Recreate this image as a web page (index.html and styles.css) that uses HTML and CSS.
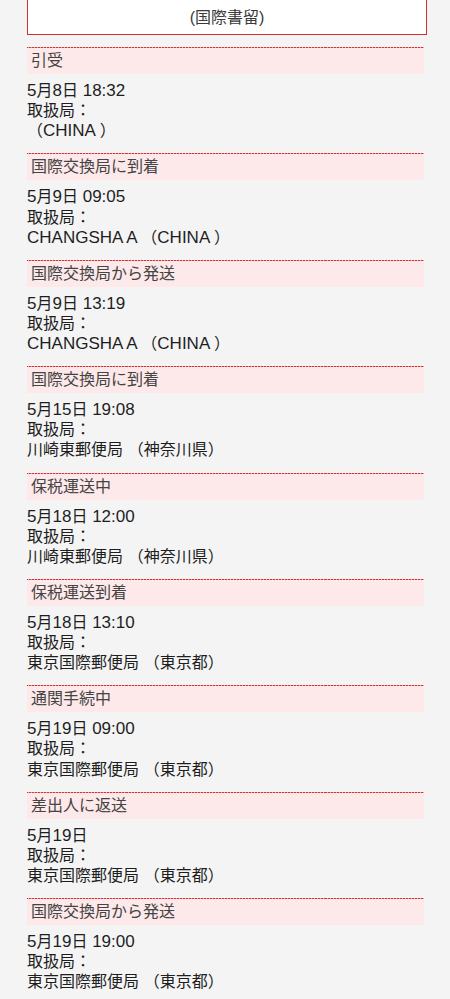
FILE: index.html
```html
<!DOCTYPE html>
<html lang="ja">
<head>
<meta charset="utf-8">
<link rel="stylesheet" href="styles.css">
</head>
<body>
<main class="page">
  <div class="title-box">(国際書留)</div>
  <ul class="events">
    <li class="event">
      <div class="event-head">引受</div>
      <div class="event-body"><span class="lt">5</span>月<span class="lt">8</span>日<span class="lt"> 18:32</span><br>取扱局：<br>（<span class="lt">CHINA </span>）</div>
    </li>
    <li class="event">
      <div class="event-head">国際交換局に到着</div>
      <div class="event-body"><span class="lt">5</span>月<span class="lt">9</span>日<span class="lt"> 09:05</span><br>取扱局：<br><span class="lt">CHANGSHA A </span>（<span class="lt">CHINA </span>）</div>
    </li>
    <li class="event">
      <div class="event-head">国際交換局から発送</div>
      <div class="event-body"><span class="lt">5</span>月<span class="lt">9</span>日<span class="lt"> 13:19</span><br>取扱局：<br><span class="lt">CHANGSHA A </span>（<span class="lt">CHINA </span>）</div>
    </li>
    <li class="event">
      <div class="event-head">国際交換局に到着</div>
      <div class="event-body"><span class="lt">5</span>月<span class="lt">15</span>日<span class="lt"> 19:08</span><br>取扱局：<br>川崎東郵便局<span class="lt"> </span>（神奈川県）</div>
    </li>
    <li class="event">
      <div class="event-head">保税運送中</div>
      <div class="event-body"><span class="lt">5</span>月<span class="lt">18</span>日<span class="lt"> 12:00</span><br>取扱局：<br>川崎東郵便局<span class="lt"> </span>（神奈川県）</div>
    </li>
    <li class="event">
      <div class="event-head">保税運送到着</div>
      <div class="event-body"><span class="lt">5</span>月<span class="lt">18</span>日<span class="lt"> 13:10</span><br>取扱局：<br>東京国際郵便局<span class="lt"> </span>（東京都）</div>
    </li>
    <li class="event">
      <div class="event-head">通関手続中</div>
      <div class="event-body"><span class="lt">5</span>月<span class="lt">19</span>日<span class="lt"> 09:00</span><br>取扱局：<br>東京国際郵便局<span class="lt"> </span>（東京都）</div>
    </li>
    <li class="event">
      <div class="event-head">差出人に返送</div>
      <div class="event-body"><span class="lt">5</span>月<span class="lt">19</span>日<br>取扱局：<br>東京国際郵便局<span class="lt"> </span>（東京都）</div>
    </li>
    <li class="event">
      <div class="event-head">国際交換局から発送</div>
      <div class="event-body"><span class="lt">5</span>月<span class="lt">19</span>日<span class="lt"> 19:00</span><br>取扱局：<br>東京国際郵便局<span class="lt"> </span>（東京都）</div>
    </li>
  </ul>
</main>
</body>
</html>
```

FILE: styles.css
```css
html, body {
  margin: 0;
  padding: 0;
  background: #f4f4f4;
}
body {
  font-family: "Liberation Sans", "Noto Sans CJK JP", sans-serif;
  font-size: 16px;
  color: #1e1e1e;
  overflow: hidden;
}
.page {
  padding: 0 24px 0 27px;
}
.title-box {
  width: 398px;
  margin-top: -20px;
  padding: 27px 0 6px;
  line-height: 20px;
  text-align: center;
  background: #ffffff;
  border: 1px solid #d0312f;
  color: #3a3a3a;
}
.events {
  list-style: none;
  margin: 12px 0 0;
  padding: 0;
  width: 397px;
}
.event-head {
  border-top: 1px solid #d83b3b;
  border-image: repeating-linear-gradient(90deg, #d63434 0 2px, #efa3a3 2px 3px) 1;
  background: #fde8ea;
  height: 26px;
  line-height: 26px;
  padding-left: 4px;
  color: #444;
}
.event-body {
  margin: 7px 0 12px;
  line-height: 20.125px;
}
.lt {
  font-size: 17px;
}
```
